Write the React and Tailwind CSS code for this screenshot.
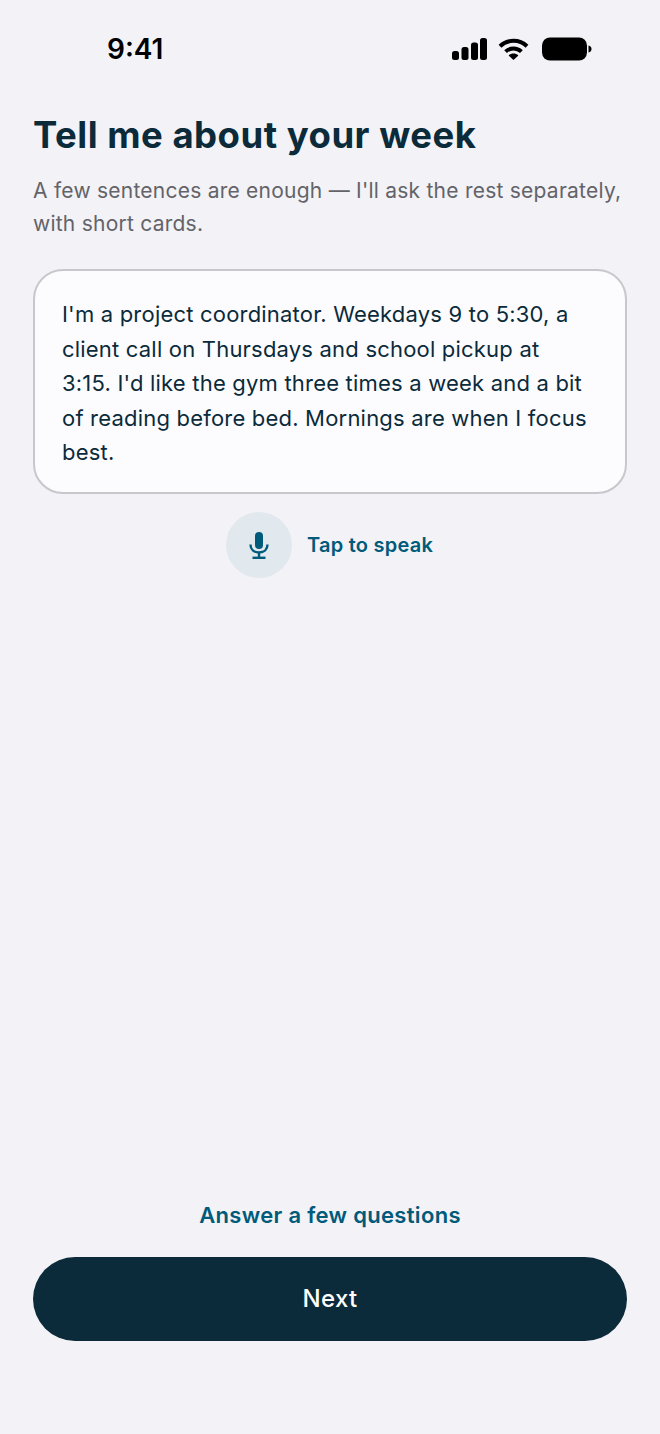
import { useState } from 'react';

function StatusBar() {
  return (
    <div className="flex items-center justify-between h-[32px] pl-[107px] pr-[68px]">
      <span className="text-[28px] font-semibold text-black leading-none">9:41</span>
      <div className="flex items-center gap-[11px]">
        <svg width="35" height="22" viewBox="0 0 35 22" fill="#000">
          <rect x="0" y="13" width="7" height="9" rx="2.5" />
          <rect x="9.5" y="9" width="7" height="13" rx="2.5" />
          <rect x="19" y="4.5" width="7" height="17.5" rx="2.5" />
          <rect x="28" y="0" width="7" height="22" rx="2.5" />
        </svg>
        <svg width="31" height="22" viewBox="0 0 31 22" fill="none" stroke="#000" strokeWidth="4">
          <path d="M2 8.2C9.6 1 21.4 1 29 8.2" />
          <path d="M7.6 13.6C12 9.4 19 9.4 23.4 13.6" />
          <path d="M15.5 22L10.6 17.4C13.4 15 17.6 15 20.4 17.4Z" fill="#000" stroke="none" />
        </svg>
        <svg width="50" height="24" viewBox="0 0 50 24" fill="#000" className="ml-[2px]">
          <rect x="0" y="0.5" width="45" height="23" rx="8" />
          <path d="M46.5 8.5C48.5 9 49.5 10.4 49.5 12C49.5 13.6 48.5 15 46.5 15.5Z" />
        </svg>
      </div>
    </div>
  );
}

export default function App() {
  const [note, setNote] = useState(
    "I'm a project coordinator. Weekdays 9 to 5:30, a client call on Thursdays and school pickup at 3:15. I'd like the gym three times a week and a bit of reading before bed. Mornings are when I focus best."
  );

  return (
    <div className="h-[1434px] w-[660px] bg-[#f2f2f7] flex flex-col font-['Inter',sans-serif] pt-[33px]">
      <StatusBar />

      <div className="flex-1 flex flex-col px-[33px]">
        <h1 className="mt-[47px] text-[36.5px] leading-[46px] tracking-[0.5px] font-bold text-[#0b2a3a]">
          Tell me about your week
        </h1>
        <p className="mt-[16px] text-[21px] leading-[33px] tracking-[0.24px] text-[#636369]">
          A few sentences are enough — I'll ask the rest separately, with short cards.
        </p>

        <div className="mt-[29px] h-[225px] rounded-[30px] border-2 border-[#c7c7cc] bg-[#fcfcfe] pl-[27px] pr-[33px] pt-[26px]">
          <p className="text-[22px] leading-[34.6px] tracking-[0.2px] text-[#0b2a3a]">{note}</p>
        </div>

        <div className="mt-[18px] flex items-center justify-center gap-[15px] pr-[1px]">
          <button
            type="button"
            onClick={() => setNote(note)}
            className="w-[66px] h-[66px] rounded-full bg-[#e1e8ee] flex items-center justify-center"
          >
            <svg width="24" height="28" viewBox="0 0 24 28" fill="none" stroke="#005a7a" strokeWidth="2.4">
              <rect x="8" y="1" width="8" height="17" rx="4" fill="#005a7a" stroke="none" />
              <path d="M3.5 13.5C3.5 18.5 7 21.5 12 21.5C17 21.5 20.5 18.5 20.5 13.5" />
              <path d="M12 21.5V26.5" />
              <path d="M5.5 26.8H18.5" />
            </svg>
          </button>
          <span className="text-[20px] tracking-[0.25px] font-semibold text-[#005a7a]">Tap to speak</span>
        </div>

        <div className="mt-auto flex flex-col items-center pb-[93px]">
          <button type="button" className="text-[22px] leading-[30px] tracking-[0.32px] font-semibold text-[#005a7a]">
            Answer a few questions
          </button>
          <button
            type="button"
            className="mt-[27px] w-full h-[84px] rounded-full bg-[#0b2a3a] text-white text-[24px] tracking-[0.3px] font-medium"
          >
            Next
          </button>
        </div>
      </div>
    </div>
  );
}
